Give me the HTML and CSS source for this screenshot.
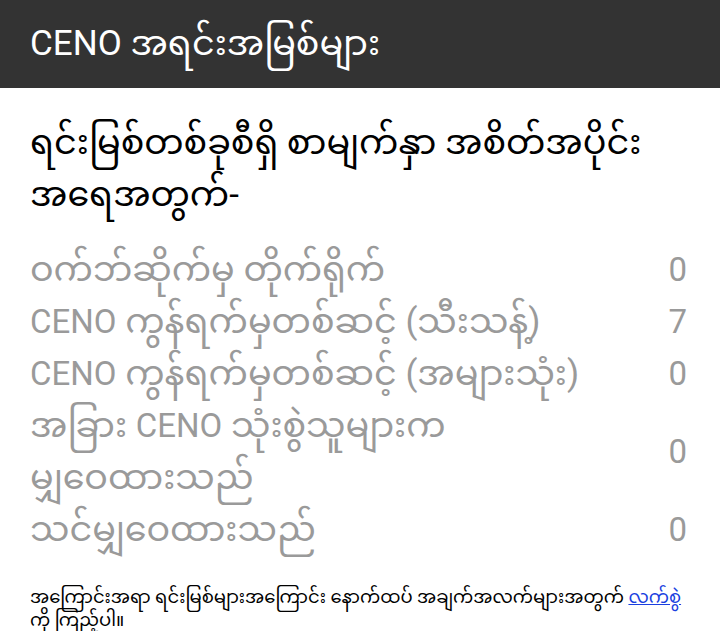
FILE: index.html
```html
<!DOCTYPE html>
<html lang="my">
<head>
<meta charset="utf-8">
<link rel="stylesheet" href="styles.css">
</head>
<body>
<header class="bar">
  <h1 class="title">CENO အရင်းအမြစ်များ</h1>
</header>
<main class="content">
  <h2 class="heading">ရင်းမြစ်တစ်ခုစီရှိ စာမျက်နှာ အစိတ်အပိုင်း အရေအတွက်-</h2>
  <ul class="stats">
    <li class="row"><span class="label">ဝက်ဘ်ဆိုက်မှ တိုက်ရိုက်</span><span class="num">0</span></li>
    <li class="row"><span class="label"><span class="latin">CENO</span> ကွန်ရက်မှတစ်ဆင့် (သီးသန့်)</span><span class="num">7</span></li>
    <li class="row"><span class="label"><span class="latin">CENO</span> ကွန်ရက်မှတစ်ဆင့် (အများသုံး)</span><span class="num">0</span></li>
    <li class="row"><span class="label"><span class="word">အခြား</span> <span class="latin">CENO</span> <span class="word">သုံးစွဲသူများက</span> <span class="word">မျှဝေထားသည်</span></span><span class="num">0</span></li>
    <li class="row"><span class="label">သင်မျှဝေထားသည်</span><span class="num">0</span></li>
  </ul>
  <p class="note"><span class="word">အကြောင်းအရာ</span> <span class="word">ရင်းမြစ်များအကြောင်း</span> <span class="word">နောက်ထပ်</span> <span class="word">အချက်အလက်များအတွက်</span> <a href="#" class="link word">လက်စွဲ</a> <span class="word">ကို</span> <span class="word">ကြည့်ပါ။</span></p>
</main>
</body>
</html>
```
FILE: styles.css
```css
html, body {
  margin: 0;
  padding: 0;
  background: #ffffff;
  font-family: Roboto, "Noto Sans Myanmar", "Noto Sans", sans-serif;
}
.bar {
  background: #333333;
  height: 88px;
  display: flex;
  align-items: center;
  padding: 0 30px;
}
.title {
  margin: 0;
  color: #ffffff;
  font-size: 35px;
  font-weight: 400;
  line-height: 52px;
}
.content {
  padding: 29px 30px 0 30px;
}
.heading {
  margin: 0;
  font-size: 35px;
  font-weight: 400;
  line-height: 52px;
  color: #000000;
}
.stats {
  list-style: none;
  margin: 23px 0 0 0;
  padding: 0 3px 0 0;
}
.row {
  display: flex;
  justify-content: space-between;
  align-items: center;
  color: #9a9a9a;
  font-size: 35px;
  line-height: 52px;
}
.label {
  flex: 1;
  padding-right: 50px;
}
.word {
  white-space: nowrap;
}
.latin {
  font-size: 33px;
}
.num {
  flex: none;
  font-size: 33px;
}
.note {
  margin: 29px 0 0 0;
  font-size: 18px;
  line-height: 23px;
  color: #000000;
}
.link {
  color: #1a3fe0;
}
```
